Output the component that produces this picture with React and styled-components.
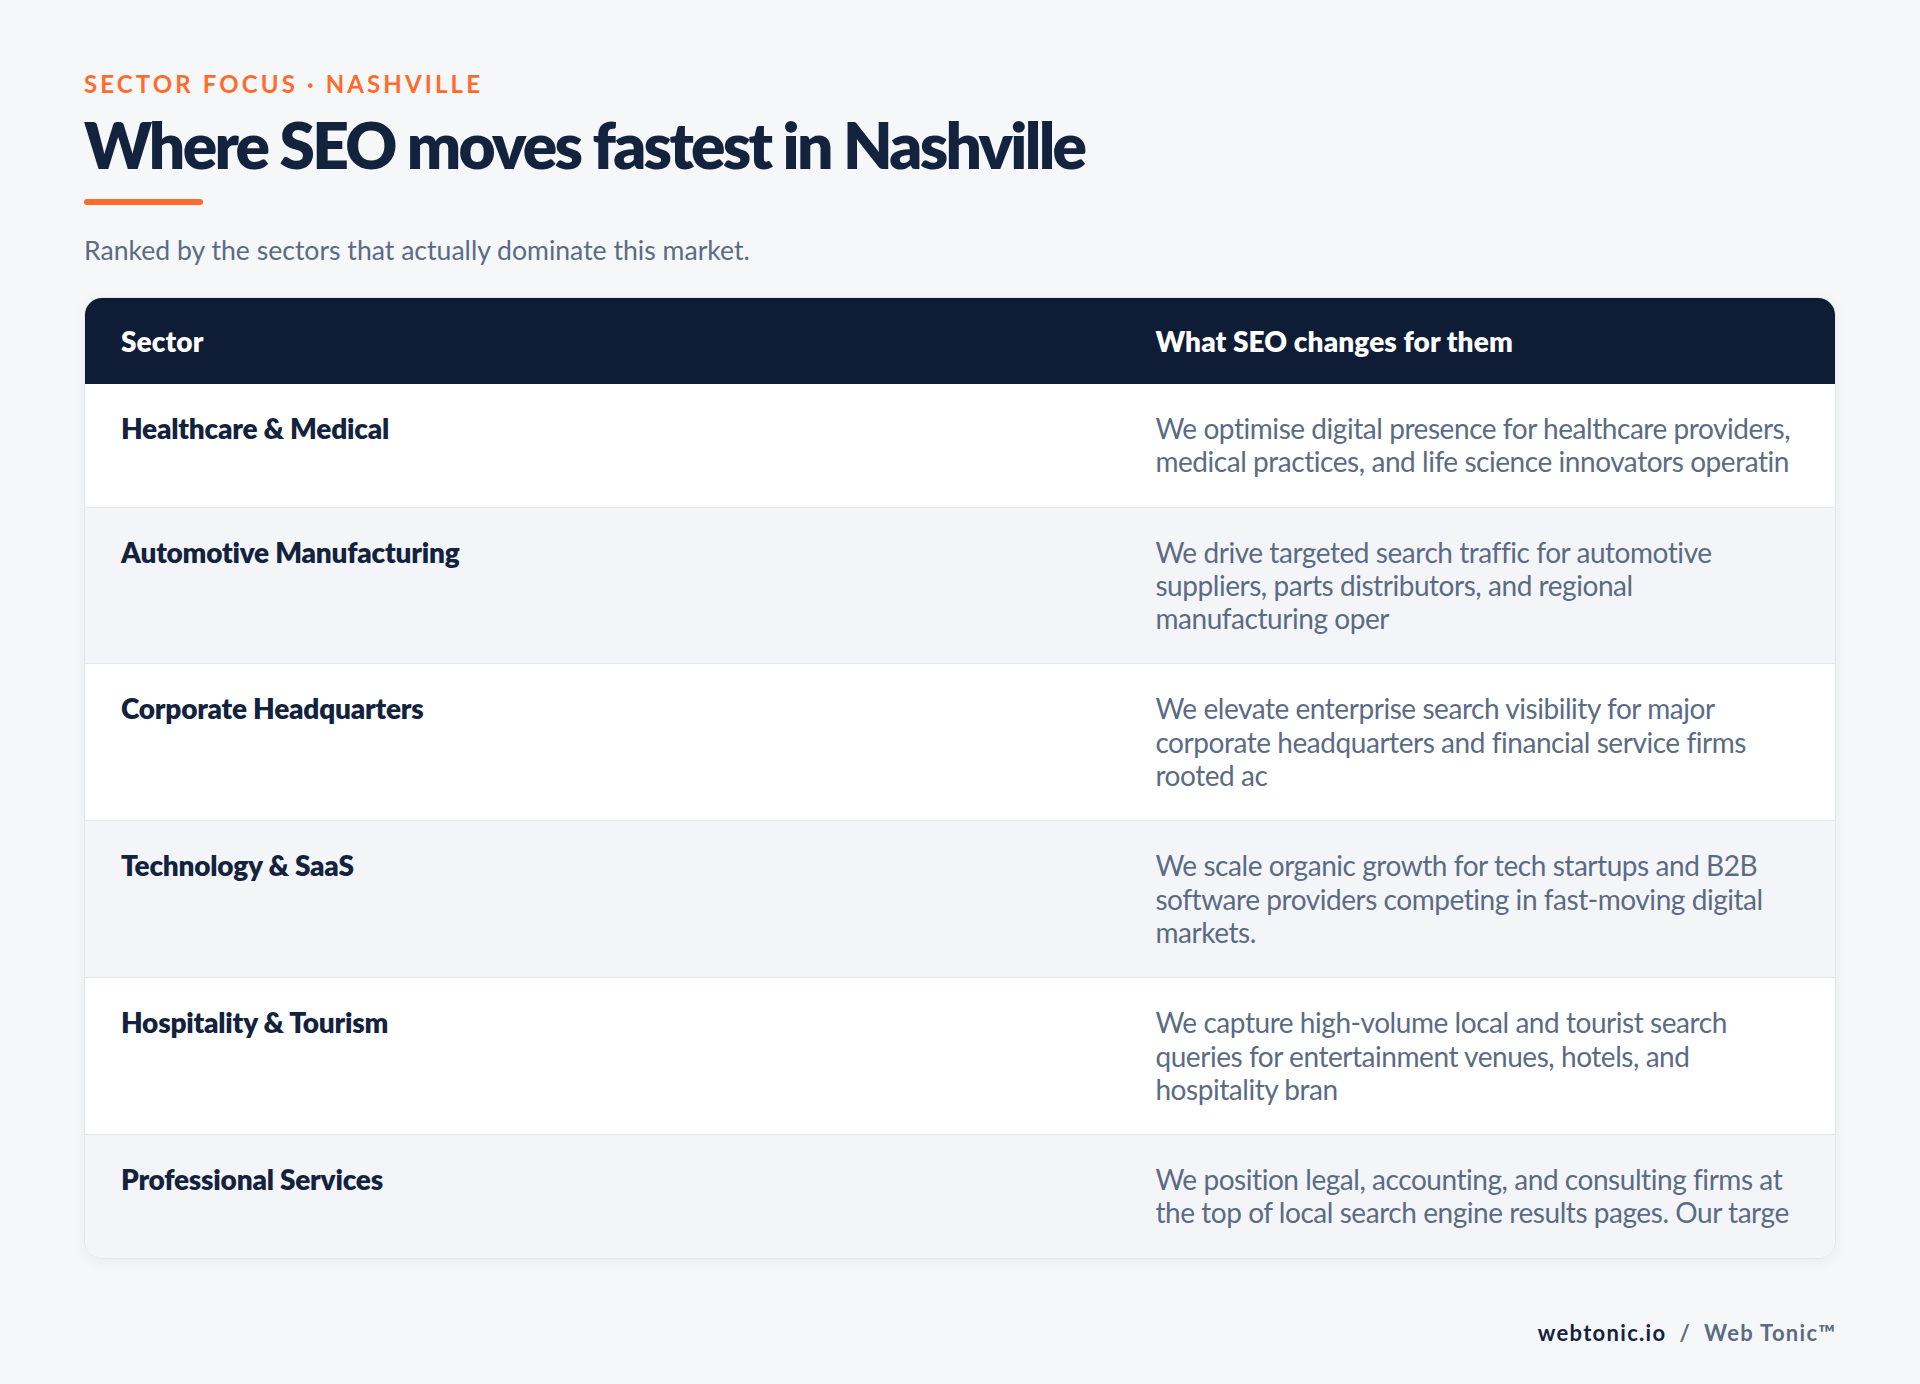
import React from "react";
import styled, { createGlobalStyle } from "styled-components";

const Global = createGlobalStyle`
  html, body { margin: 0; padding: 0; background: #f6f7f9; }
  body { font-family: Lato, "Open Sans", "Liberation Sans", sans-serif; -webkit-font-smoothing: antialiased; }
  * { box-sizing: border-box; }
`;

const Page = styled.div`
  width: 1920px;
  min-height: 1384px;
  padding: 70px 84px 40px 84px;
  background: #f6f7f9;
  display: flex;
  flex-direction: column;
`;

const Eyebrow = styled.div`
  font-size: 24px;
  line-height: 28px;
  font-weight: 700;
  letter-spacing: 0.13em;
  text-transform: uppercase;
  color: #ff6b2c;
`;

const Title = styled.h1`
  margin: 12px 0 0 0;
  font-size: 64px;
  line-height: 70px;
  font-weight: 800;
  letter-spacing: -0.042em;
  color: #13223d;
`;

const Accent = styled.div`
  margin-top: 19px;
  width: 119px;
  height: 6px;
  border-radius: 3px;
  background: #ff6b2c;
`;

const Subtitle = styled.p`
  margin: 28px 0 0 0;
  font-size: 26.6px;
  line-height: 34px;
  color: #5b6b84;
`;

const Table = styled.div`
  margin-top: 30px;
  border: 1px solid #e3e7ef;
  border-radius: 18px;
  overflow: hidden;
  background: #fff;
  box-shadow: 0 4px 14px rgba(16, 30, 60, 0.05);
`;

const Row = styled.div`
  display: grid;
  grid-template-columns: minmax(0, 1035fr) minmax(0, 716fr);
  background: ${(p) => (p.$alt ? "#f4f5f9" : "#ffffff")};
  border-top: ${(p) => (p.$first ? "none" : "1px solid #e3e7ef")};
`;

const HeadRow = styled.div`
  display: grid;
  grid-template-columns: minmax(0, 1035fr) minmax(0, 716fr);
  background: #0e1c36;
  height: 86px;
  align-items: center;
`;

const HeadCell = styled.div`
  padding: 0 36px;
  font-size: 28px;
  font-weight: 800;
  letter-spacing: 0.004em;
  color: #ffffff;
`;

const SectorCell = styled.div`
  padding: 28px 36px;
  font-size: 28px;
  line-height: 33.3px;
  font-weight: 800;
  letter-spacing: -0.008em;
  color: #13223d;
`;

const DescCell = styled.div`
  padding: 28px 36px;
  font-size: 28px;
  line-height: 33.3px;
  font-weight: 400;
  letter-spacing: -0.016em;
  color: #5b6b84;
`;

const Footer = styled.div`
  margin-top: 61px;
  display: flex;
  justify-content: flex-end;
  align-items: center;
  gap: 13px;
  font-size: 22px;
  line-height: 26px;
  font-weight: 700;
  letter-spacing: 0.06em;
`;

const Brand = styled.span`
  color: #13223d;
`;

const Sep = styled.span`
  color: #5b6b84;
`;

const Company = styled.span`
  color: #5b6b84;
`;

const rows = [
  ["Healthcare & Medical", "We optimise digital presence for healthcare providers, medical practices, and life science innovators operatin"],
  ["Automotive Manufacturing", "We drive targeted search traffic for automotive suppliers, parts distributors, and regional manufacturing oper"],
  ["Corporate Headquarters", "We elevate enterprise search visibility for major corporate headquarters and financial service firms rooted ac"],
  ["Technology & SaaS", "We scale organic growth for tech startups and B2B software providers competing in fast-moving digital markets."],
  ["Hospitality & Tourism", "We capture high-volume local and tourist search queries for entertainment venues, hotels, and hospitality bran"],
  ["Professional Services", "We position legal, accounting, and consulting firms at the top of local search engine results pages. Our targe"],
];

export default function App() {
  return (
    <>
      <Global />
      <Page>
        <Eyebrow>Sector focus · Nashville</Eyebrow>
        <Title>Where SEO moves fastest in Nashville</Title>
        <Accent />
        <Subtitle>Ranked by the sectors that actually dominate this market.</Subtitle>
        <Table>
          <HeadRow>
            <HeadCell>Sector</HeadCell>
            <HeadCell>What SEO changes for them</HeadCell>
          </HeadRow>
          {rows.map(([s, d], i) => (
            <Row key={s} $alt={i % 2 === 1} $first={i === 0}>
              <SectorCell>{s}</SectorCell>
              <DescCell>{d}</DescCell>
            </Row>
          ))}
        </Table>
        <Footer>
          <Brand>webtonic.io</Brand>
          <Sep>/</Sep>
          <Company>Web Tonic™</Company>
        </Footer>
      </Page>
    </>
  );
}
